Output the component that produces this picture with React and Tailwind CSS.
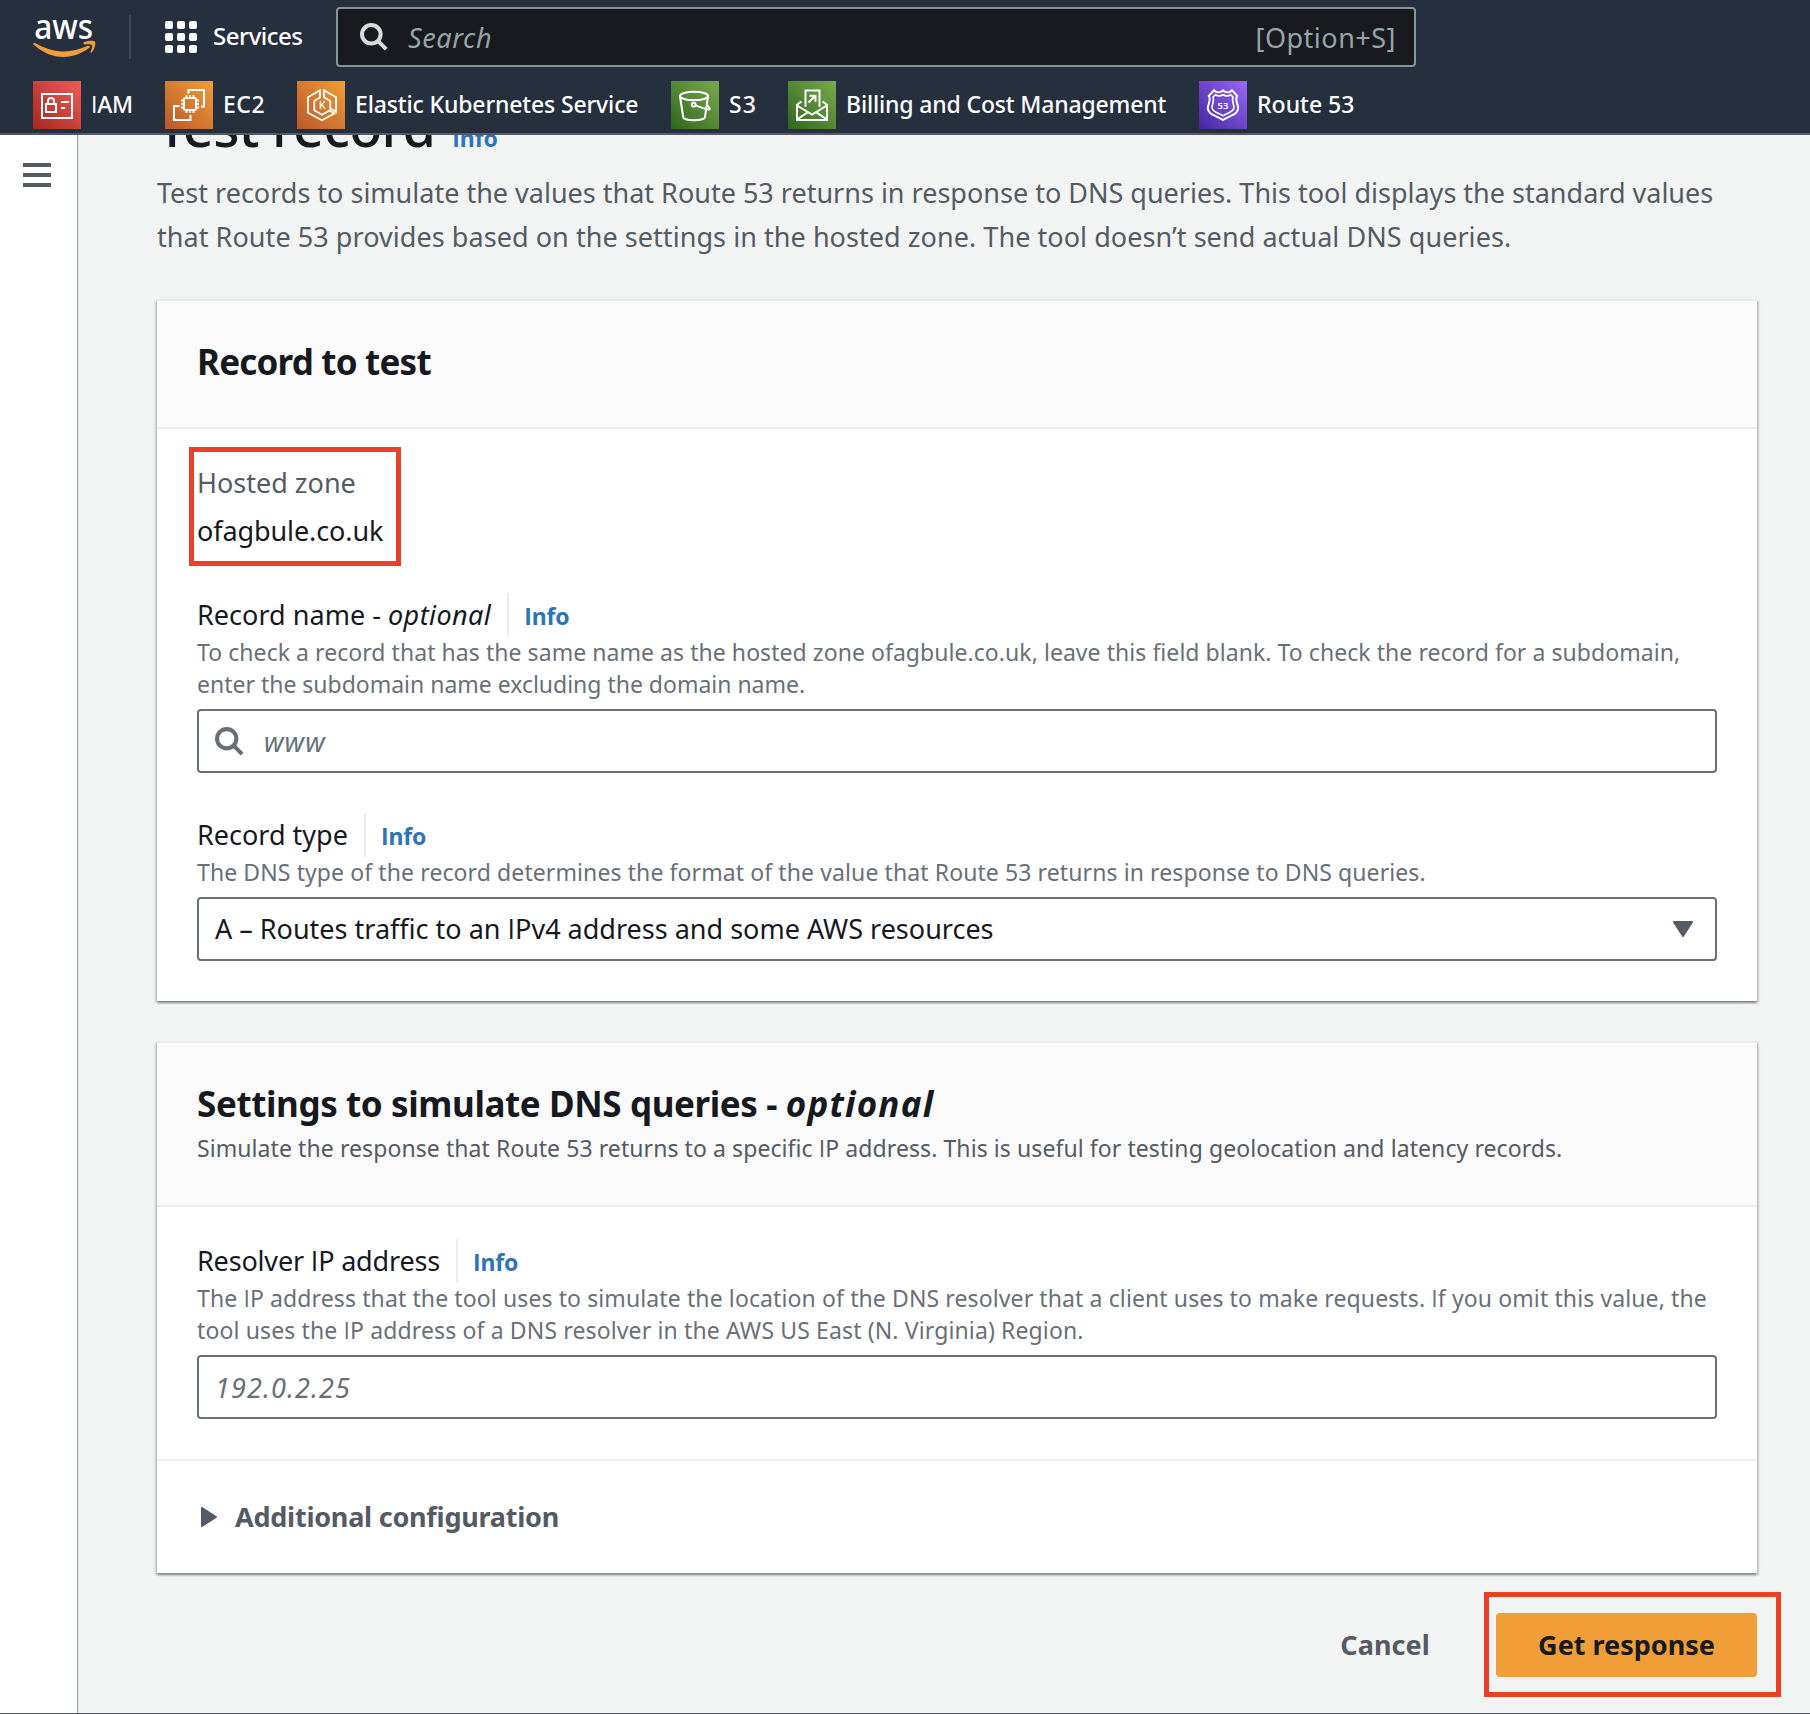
const cx = (...parts) => parts.filter(Boolean).join(" ");

// Renders text with a serifless capital I.
function Txt({ children, className }) {
  const parts = String(children).split(/(I)/);
  return (
    <span className={cx("whitespace-pre", className)}>
      {parts.map((p, i) =>
        p === "I" ? (
          <span key={i} className="font-['Open_Sans',sans-serif]">I</span>
        ) : (
          p
        )
      )}
    </span>
  );
}

function SearchIcon({ className }) {
  return (
    <svg viewBox="0 0 28 28" className={className} fill="none" stroke="currentColor" strokeWidth="4">
      <circle cx="11.3" cy="11.3" r="9.3" />
      <path d="M17.8 17.8 26.2 26.2" />
    </svg>
  );
}

function AwsLogo() {
  return (
    <svg viewBox="0 0 66 44" className="h-[44px] w-[66px] overflow-visible">
      <text x="1.2" y="23.500" fill="#fff" fontSize="35" fontWeight="500" textLength="59" lengthAdjust="spacingAndGlyphs" fontFamily="'Noto Sans', sans-serif">
        aws
      </text>
      <path
        d="M.3 28.4c.4-.7 1-.7 1.7-.3C11 33 20 36.500 30 36.500c9 0 17-2.300 25-5.700 1.600-.6 2.600 1 1.300 2C49 38.300 40 42 30.500 42 19 42 9 37 .8 29.700c-.4-.4-.7-.9-.5-1.300z"
        fill="#f19e38"
      />
      <path
        d="M50.500 28.600c-.6-.8.1-1.200.8-1.500 3.400-1.500 9.500-1.700 10.700-.4 1.100 1.500-.3 7.800-3.400 10.900-.6.6-1.300.4-1.100-.4.8-2.200 2.200-6 1.500-7.200-.8-1-5-.8-7.400-.6-.5.1-.9-.3-1.100-.8z"
        fill="#f19e38"
      />
    </svg>
  );
}

function IamGlyph() {
  return (
    <g>
      <path d="M9 13h30v24H9zM13 23h10v8H13zM15 22.500V20a3 3 0 0 1 6 0v2.500M28 21h8M28 27h4" />
    </g>
  );
}

function Ec2Glyph() {
  return (
    <g>
      <rect x="19" y="17" width="12" height="12" rx="1.500" />
      <path d="M21.500 16v-2M25 16v-2M28.500 16v-2M21.500 32v-2M25 32v-2M28.500 32v-2M18 19.500h-2M18 23h-2M18 26.500h-2M34 19.500h-2M34 23h-2M34 26.500h-2" strokeWidth="1.800" />
      <path d="M23.500 12.500V9H39v16.500h-3M14.500 25H9v14h16.500v-5" />
    </g>
  );
}

function EksGlyph() {
  return (
    <g>
      <path d="M23 9.300 11 16.300v15.400l14 7.600 12.300-6.800-5-3L25 33.800l-7.700-4.600V20L23 16.500zM27 9.300l12 7v14.500l-5.700-3.400V20L27 16.300z" strokeWidth="1.800" />
      <text x="21.700" y="28.200" fontSize="11" fontWeight="500" fill="#fff" stroke="none" fontFamily="'Noto Sans', sans-serif">K</text>
    </g>
  );
}

function S3Glyph() {
  return (
    <g>
      <ellipse cx="23" cy="15" rx="14" ry="4.200" />
      <path d="m9 15.500 3.300 21c.4 1.700 5.700 2.700 10.700 2.700s10.500-1 10.900-2.700L37 15.500" />
      <circle cx="22.700" cy="23.700" r="1.900" />
      <path d="M24.600 24.300c4.800 2 9.400 3.600 13.400 4.200 1.300.1.600-2.300-2.300-4.600" />
    </g>
  );
}

function BillingGlyph() {
  return (
    <g>
      <path d="M13.500 20.500 9 23.800V39h30V23.800l-4.500-3.300M17.500 26V9.500h14V26M9 24.500l15 9 15-9M9 38.500l11-7.300M39 38.500l-11-7.300" />
      <path d="m20.500 21.500 6.500-6.500M21.500 14.800h6v6" />
    </g>
  );
}

function Route53Glyph() {
  return (
    <g>
      <path d="M15 9.200c2.400 2.600 6.200 2.600 9 .2 2.800 2.400 6.600 2.400 9-.2l5.200 5.600c-2.800 4.600 1 8.200 1 12.200 0 7-8.700 7.400-15.200 12-6.500-4.600-15.200-5-15.200-12 0-4 3.800-7.600 1-12.200z" />
      <path d="M16.300 13.800c2.400 1.500 5.400 1.400 7.700 0 2.300 1.400 5.300 1.500 7.700 0l2.300 2.400c-1.700 4.200 1 6.800 1 10.300 0 4.500-5.800 5-11 8.300-5.200-3.300-11-3.800-11-8.300 0-3.500 2.700-6.100 1-10.300z" strokeWidth="1.600" />
      <text x="24" y="28.300" textAnchor="middle" fontSize="9.500" fontWeight="600" fill="#fff" stroke="none" fontFamily="'Noto Sans', sans-serif">53</text>
    </g>
  );
}

const favorites = [
  { name: "IAM", glyph: IamGlyph, width: "w-[132px]", tile: "from-[#a92520] to-[#ee5d58]", track: "tracking-[-0.3px]" },
  { name: "EC2", glyph: Ec2Glyph, width: "w-[132px]", tile: "from-[#b8582b] to-[#f19e38]", track: "tracking-[0.5px]" },
  { name: "Elastic Kubernetes Service", glyph: EksGlyph, width: "w-[374px]", tile: "from-[#b8582b] to-[#f19e38]", track: "tracking-[-0.14px]" },
  { name: "S3", glyph: S3Glyph, width: "w-[117px]", tile: "from-[#2f671f] to-[#79ab4f]", track: "tracking-[1px]" },
  { name: "Billing and Cost Management", glyph: BillingGlyph, width: "w-[411px]", tile: "from-[#2f671f] to-[#79ab4f]", track: "tracking-[-0.16px]" },
  { name: "Route 53", glyph: Route53Glyph, width: "w-[200px]", tile: "from-[#46259e] to-[#9a68f8]", track: "tracking-[0.02px]" },
];

function TopNav() {
  return (
    <header className="flex h-[135px] flex-col border-b-2 border-[#545b64] bg-[#262f3e] text-white">
      <div className="flex h-[74px] items-center">
        <div className="ml-[33px] h-[44px] w-[66px]">
          <AwsLogo />
        </div>
        <div className="ml-[30px] h-11 w-0.5 bg-[#414750]" />
        <div className="ml-[34px] grid grid-cols-3 gap-1">
          {Array.from({ length: 9 }, (_, i) => (
            <span key={i} className="size-2 rounded-[2px] bg-white" />
          ))}
        </div>
        <Txt className="ml-[16px] w-[123px] pb-0.5 text-[24px] leading-[42px] font-medium tracking-[-0.5px]">Services</Txt>
        <div className="flex h-[60px] w-[1080px] items-center rounded border-2 border-[#879596] bg-[#191a1f] pr-[18px] pl-[22px]">
          <SearchIcon className="size-[28px] text-[#d5dbdb]" />
          <Txt className="ml-[20px] grow pt-0.5 text-[27px] tracking-[0.6px] text-[#95a5a6] italic">Search</Txt>
          <Txt className="pt-0.5 text-[27px] tracking-[0.5px] text-[#95a5a6]">[Option+S]</Txt>
        </div>
      </div>
      <nav className="mt-[7px] flex h-12 pl-[33px]">
        {favorites.map(({ name, glyph: Glyph, width, tile, track }) => (
          <div key={name} className={cx("flex items-center gap-[10px]", width)}>
            <span className={cx("size-12 shrink-0 bg-linear-to-tr", tile)}>
              <svg viewBox="0 0 48 48" className="size-12" fill="none" stroke="#fff" strokeWidth="2">
                <Glyph />
              </svg>
            </span>
            <Txt className={cx("pb-0.5 text-[23px] leading-[46px] font-medium", track)}>{name}</Txt>
          </div>
        ))}
      </nav>
    </header>
  );
}

function Info() {
  return <Txt className="text-[23px] font-bold tracking-[-0.1px] text-[#2e73b8]">Info</Txt>;
}

function Field({ label, labelTrack, optional, hints, children }) {
  return (
    <div>
      <div className="flex h-11">
        <div className="text-[27px] leading-[43px] text-[#16191f]">
          <Txt className={labelTrack}>{label}</Txt>
          {optional && <Txt className="tracking-[0.4px] italic">optional</Txt>}
        </div>
        <div className="ml-4 w-0.5 bg-[#eaeded]" />
        <div className="ml-[15px] leading-[47px]">
          <Info />
        </div>
      </div>
      <div className="-mt-px flex flex-col text-[23px] leading-[32px] text-[#687078]">
        {hints.map(([text, track]) => (
          <Txt key={text} className={track}>{text}</Txt>
        ))}
      </div>
      <div className="mt-[9px] flex h-16 items-center rounded border-2 border-[#687078] bg-white px-4">{children}</div>
    </div>
  );
}

const cardClass =
  "w-[1600px] border-t-2 border-[#eaeded] bg-white shadow-[0_2px_2px_0_rgba(0,28,36,0.3),2px_2px_2px_0_rgba(0,28,36,0.15),-2px_2px_2px_0_rgba(0,28,36,0.15)]";

export default function App() {
  return (
    <div className="flex h-[1714px] w-[1810px] flex-col overflow-hidden border-b border-[#545b64] bg-[#f2f3f3] font-['Noto_Sans',sans-serif]">
      <TopNav />
      <div className="flex min-h-0 grow">
        <aside className="z-10 w-[77px] shrink-0 bg-white pt-7 pl-[23px] shadow-[1px_0_1px_0_rgba(0,28,36,0.35)]">
          <div className="flex w-7 flex-col gap-1.5">
            <span className="h-1 bg-[#545b64]" />
            <span className="h-1 bg-[#545b64]" />
            <span className="h-1 bg-[#545b64]" />
          </div>
        </aside>

        <main className="grow overflow-hidden pl-20">
          <div className="-mt-[31px] flex h-[44px] items-baseline leading-[44px]">
            <h1 className="text-[54px] font-medium text-[#16191f]">
              <Txt className="tracking-[-0.7px]">Test record</Txt>
            </h1>
            <div className="ml-[17px]">
              <Info />
            </div>
          </div>
          <p className="mt-[23px] flex flex-col text-[27px] leading-[44px] text-[#545b64]">
            <Txt>Test records to simulate the values that Route 53 returns in response to DNS queries. This tool displays the standard values</Txt>
            <Txt className="tracking-[0.055px]">that Route 53 provides based on the settings in the hosted zone. The tool doesn’t send actual DNS queries.</Txt>
          </p>

          <section className={cx("mt-10", cardClass)}>
            <div className="h-32 border-b-2 border-[#eaeded] bg-[#fafafa] px-10 pt-[38px]">
              <h2 className="text-[35px] leading-[45px] font-bold text-[#16191f]">
                <Txt className="tracking-[-0.8px]">Record to test</Txt>
              </h2>
            </div>
            <div className="px-10 pt-8 pb-10">
              <div className="relative flex flex-col gap-1 text-[27px] leading-[44px]">
                <Txt className="text-[#545b64]">Hosted zone</Txt>
                <Txt className="tracking-[-0.1px] text-[#16191f]">ofagbule.co.uk</Txt>
                <div className="absolute -top-[14px] -left-[8px] h-[119px] w-[212px] border-5 border-[#ea4025]" />
              </div>
              <div className="mt-10 flex flex-col gap-10">
                <Field
                  label="Record name - "
                  labelTrack="tracking-[0.03px]"
                  optional
                  hints={[
                    ["To check a record that has the same name as the hosted zone ofagbule.co.uk, leave this field blank. To check the record for a subdomain,", "tracking-[0.055px]"],
                    ["enter the subdomain name excluding the domain name.", "tracking-[-0.01px]"],
                  ]}
                >
                  <SearchIcon className="size-[29px] text-[#687078]" />
                  <Txt className="ml-[20px] pt-0.5 text-[27px] tracking-[1.1px] text-[#687078] italic">www</Txt>
                </Field>
                <Field
                  label="Record type"
                  hints={[["The DNS type of the record determines the format of the value that Route 53 returns in response to DNS queries.", "tracking-[0.1px]"]]}
                >
                  <Txt className="grow text-[27px] text-[#16191f]">A – Routes traffic to an IPv4 address and some AWS resources</Txt>
                  <svg viewBox="0 0 20 16" className="mr-[6px] h-4 w-5" fill="#545b64" stroke="#545b64" strokeWidth="2" strokeLinejoin="round">
                    <path d="M1 1h18l-9 14z" />
                  </svg>
                </Field>
              </div>
            </div>
          </section>

          <section className={cx("mt-10", cardClass)}>
            <div className="h-[164px] border-b-2 border-[#eaeded] bg-[#fafafa] px-10 pt-[38px]">
              <h2 className="text-[35px] leading-[45px] font-bold text-[#16191f]">
                <Txt className="tracking-[-0.39px]">{"Settings to simulate DNS queries - "}</Txt>
                <Txt className="tracking-[1.2px] italic">optional</Txt>
              </h2>
              <p className="mt-1.5 text-[23px] leading-[32px] text-[#545b64]">
                <Txt className="tracking-[0.081px]">Simulate the response that Route 53 returns to a specific IP address. This is useful for testing geolocation and latency records.</Txt>
              </p>
            </div>
            <div className="px-10 pt-8 pb-10">
              <Field
                label="Resolver IP address"
                labelTrack="tracking-[-0.18px]"
                hints={[
                  ["The IP address that the tool uses to simulate the location of the DNS resolver that a client uses to make requests. If you omit this value, the", "tracking-[0.11px]"],
                  ["tool uses the IP address of a DNS resolver in the AWS US East (N. Virginia) Region.", "tracking-[0.13px]"],
                ]}
              >
                <Txt className="pt-0.5 text-[27px] tracking-[1.1px] text-[#687078] italic">192.0.2.25</Txt>
              </Field>
            </div>
            <div className="flex h-[114px] items-center border-t-2 border-[#eaeded] px-[44px]">
              <svg viewBox="0 0 16 20" className="h-5 w-4" fill="#545b64" stroke="#545b64" strokeWidth="2" strokeLinejoin="round">
                <path d="M1 1v18l14-9z" />
              </svg>
              <Txt className="ml-[18px] text-[27px] leading-[44px] font-bold tracking-[-0.24px] text-[#545b64]">Additional configuration</Txt>
            </div>
          </section>

          <div className="mt-10 flex h-16 w-[1600px] items-center justify-end text-[27px] leading-[42px] font-bold">
            <Txt className="mr-[66px] tracking-[0.1px] text-[#545b64]">Cancel</Txt>
            <div className="relative flex h-16 w-[261px] items-center justify-center rounded bg-[#f19e38] text-[#16191f]">
              <Txt>Get response</Txt>
              <div className="absolute -top-[21px] -left-[12px] h-[105px] w-[297px] border-5 border-[#ea4025]" />
            </div>
          </div>
        </main>
      </div>
    </div>
  );
}
